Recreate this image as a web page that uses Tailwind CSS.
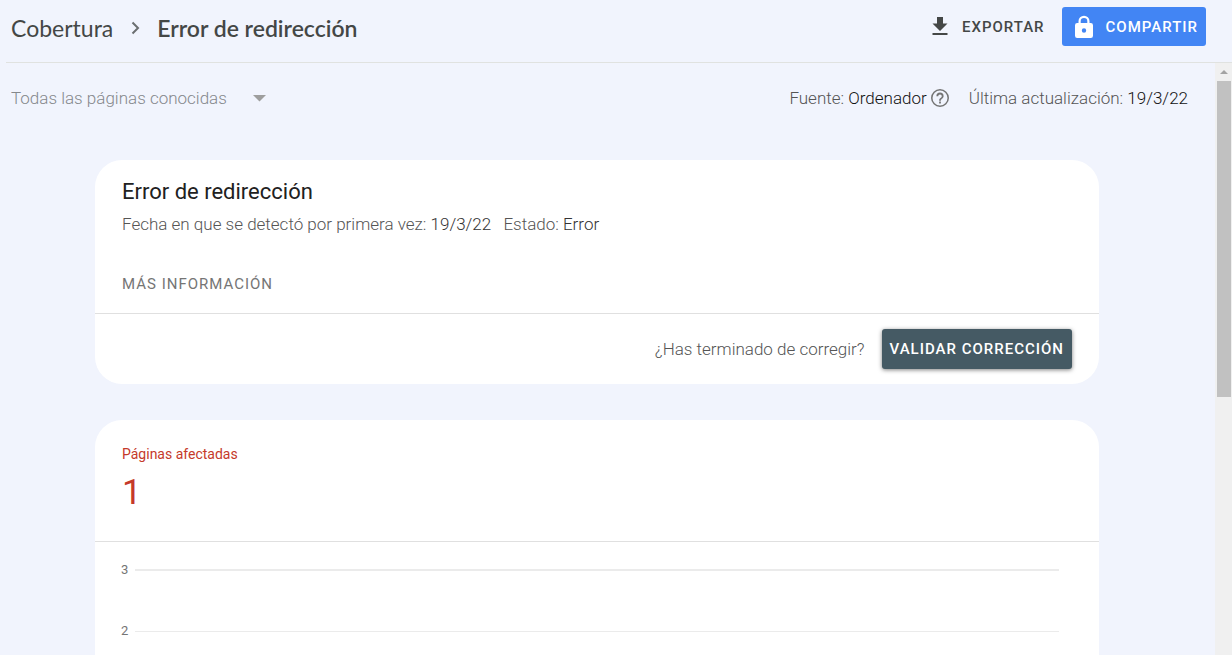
<!DOCTYPE html>
<html lang="es">
<head>
  <meta charset="UTF-8">
  <meta name="viewport" content="width=device-width, initial-scale=1.0">
  <title>Cobertura - Error de redirección</title>
  <script src="https://cdn.jsdelivr.net/npm/@tailwindcss/browser@4"></script>
</head>
<body class="flex flex-col h-screen overflow-hidden bg-[#f1f4fd] font-[Roboto,sans-serif] text-[17px] leading-6 font-light text-[#555555]">
  <header class="flex items-center justify-between shrink-0 h-[63px] ml-1.5 pl-[5px] pr-[26px] pb-[9px] border-b border-[#e0e2e0]">
    <nav class="flex items-center pt-[3px] font-[Lato,sans-serif] text-[23px] leading-7 text-[#444746]" aria-label="Ruta">
      <a href="#" class="font-normal">Cobertura</a>
      <svg class="w-6 h-6 mx-2.5 text-[#6b6e70]" viewBox="0 0 24 24" fill="none" stroke="currentColor" stroke-width="2" aria-hidden="true">
        <path d="M9.500 6.500 15 12l-5.500 5.500"/>
      </svg>
      <h1 class="font-semibold">Error de redirección</h1>
    </nav>
    <div class="flex items-center text-[15px] font-medium tracking-[1px]">
      <button class="flex items-center gap-2.5 h-[39px] mr-[17px] text-[#444746]">
        <svg class="w-6 h-6" viewBox="0 0 24 24" fill="currentColor" aria-hidden="true">
          <path d="M19.500 8.500h-4.500V2H9v6.500H4.500L12 16zM4.500 18v2h15v-2z"/>
        </svg>
        EXPORTAR
      </button>
      <button class="flex items-center gap-2.5 h-[39px] pl-2.5 pr-2 rounded-[3px] bg-[#4285f4] text-white">
        <svg class="w-6 h-6" viewBox="0 0 24 24" fill="currentColor" aria-hidden="true">
          <path fill-rule="evenodd" d="M18.800 8h-1.300V6.200a5.500 5.500 0 0 0-11 0V8H5.200A2.200 2.200 0 0 0 3 10.200v10.600a2.200 2.200 0 0 0 2.200 2.200h13.600a2.200 2.200 0 0 0 2.200-2.200V10.200a2.200 2.200 0 0 0-2.200-2.200zM8.700 8V6.200a3.300 3.300 0 0 1 6.600 0V8zM12 17.700a2.200 2.200 0 1 1 0-4.400 2.200 2.200 0 0 1 0 4.400z"/>
        </svg>
        COMPARTIR
      </button>
    </div>
  </header>

  <div class="flex flex-1 min-h-0">
    <main class="flex-1 min-w-0 pl-1.5 pr-[27px] overflow-hidden">
      <div class="flex items-center justify-between pl-[5px] pt-[23px]">
        <div class="relative flex items-center text-[#85888c]">
          <select class="appearance-none w-[255px] bg-transparent" aria-label="Páginas">
            <option>Todas las páginas conocidas</option>
          </select>
          <svg class="absolute right-0 w-[13px] h-[7px] pointer-events-none" viewBox="0 0 13 7" fill="#9e9e9e" aria-hidden="true"><path d="M0 0h13L6.500 6.500z"/></svg>
        </div>
        <div class="flex items-center">
          <span>Fuente: <span class="text-[#111111]">Ordenador</span></span>
          <button class="ml-1 mr-5 text-[#757575]" aria-label="Ayuda">
            <svg class="w-[18px] h-[18px]" viewBox="2 2 20 20" fill="currentColor" aria-hidden="true">
              <path d="M11 18h2v-2h-2v2zm1-16a10 10 0 1 0 0 20 10 10 0 0 0 0-20zm0 18.300a8.300 8.300 0 1 1 0-16.600 8.300 8.300 0 0 1 0 16.600zm0-14.300a4 4 0 0 0-4 4h2a2 2 0 1 1 4 0c0 2-3 1.750-3 5h2c0-2.250 3-2.500 3-5a4 4 0 0 0-4-4z"/>
            </svg>
          </button>
          <span>Última actualización: <span class="text-[#111111]">19/3/22</span></span>
        </div>
      </div>

      <section class="mx-[89px] mt-[50px] rounded-[27px] bg-white">
        <div class="px-[27px] pt-[18px] pb-[17px] border-b border-[#e0e0e0]">
          <h2 class="text-[22px] leading-7 font-normal text-[#212121]">Error de redirección</h2>
          <p class="mt-1.5">
            <span class="mr-2">Fecha en que se detectó por primera vez: <span class="text-[#333333]">19/3/22</span></span>
            <span>Estado: <span class="text-[#333333]">Error</span></span>
          </p>
          <a href="#" class="inline-block mt-9 text-[15px] font-normal text-[#757575] tracking-[1px]">MÁS INFORMACIÓN</a>
        </div>
        <div class="flex items-center justify-end gap-[17px] h-[70px] px-[27px]">
          <span>¿Has terminado de corregir?</span>
          <button class="h-10 px-2 rounded-[3px] bg-[#455a64] text-white text-[15px] font-medium tracking-[1px] shadow-[0_1px_4px_rgba(0,0,0,0.5)]">VALIDAR CORRECCIÓN</button>
        </div>
      </section>

      <section class="mx-[89px] mt-9 rounded-t-[27px] bg-white">
        <div class="px-[27px] pt-[22px] pb-7 border-b border-[#e0e0e0] font-normal text-[#c5392a]">
          <h3 class="text-sm leading-6">Páginas afectadas</h3>
          <p class="mt-[7px] text-[35px] leading-10">1</p>
        </div>
        <div class="pl-[26px] pr-10 pt-[19px] pb-20 text-[13px] leading-[18px] font-normal text-[#757575]">
          <div class="flex items-center gap-[7px] mb-[43px]">
            <span>3</span>
            <div class="flex-1 h-0.5 bg-[#ebebeb]"></div>
          </div>
          <div class="flex items-center gap-[7px]">
            <span>2</span>
            <div class="flex-1 h-px bg-[#ebebeb]"></div>
          </div>
        </div>
      </section>
    </main>

    <div class="flex flex-col w-[17px] pr-px pl-0.5 bg-[#f0f0f0]" aria-hidden="true">
      <div class="flex items-center justify-center h-[18px]">
        <svg class="w-2 h-1" viewBox="0 0 8 4" fill="#a3a3a3"><path d="M0 4h8L4 0z"/></svg>
      </div>
      <div class="h-[316px] bg-[#c1c1c1]"></div>
    </div>
  </div>
</body>
</html>
